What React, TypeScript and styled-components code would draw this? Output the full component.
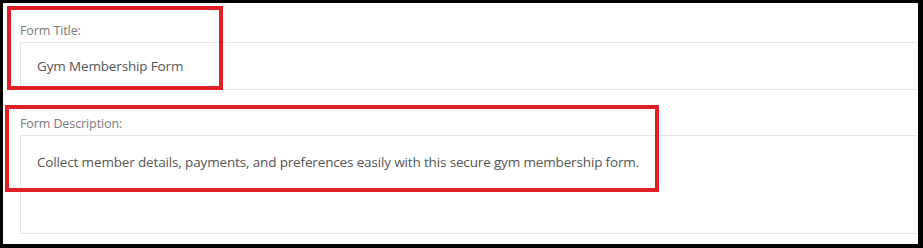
import React from "react";
import styled, { createGlobalStyle } from "styled-components";

const Global = createGlobalStyle`
  html, body { margin: 0; padding: 0; background: #ffffff; }
  * { box-sizing: border-box; }
`;

const Frame = styled.div`
  position: relative;
  width: 923px;
  height: 248px;
  background: #ffffff;
  border-style: solid;
  border-color: #000000;
  border-width: 3px 5px 4px 3px;
  padding: 19px 0 0 17px;
  display: flex;
  flex-direction: column;
  gap: 25px;
  font-family: "Open Sans", "Noto Sans", sans-serif;
`;

const Field = styled.div`
  display: flex;
  flex-direction: column;
  gap: 2px;
`;

const Label = styled.label`
  display: block;
  height: 18px;
  line-height: 18px;
  font-size: 12.5px;
  color: #7a7a7a;
  letter-spacing: -0.1px;
`;

const TextBox = styled.input`
  display: block;
  width: 100%;
  height: 48px;
  margin: 0;
  padding: 0 16px;
  border: 1px solid #e6e6e6;
  border-right-color: #f0f0f0;
  background: #ffffff;
  font-family: inherit;
  font-size: 13.5px;
  color: #555555;
  letter-spacing: -0.15px;
  outline: none;
`;

const TextArea = styled.textarea`
  display: block;
  width: 100%;
  height: 99px;
  margin: 0;
  padding: 16px 16px;
  border: 1px solid #e6e6e6;
  border-right-color: #f0f0f0;
  background: #ffffff;
  font-family: inherit;
  font-size: 13.5px;
  line-height: 20px;
  color: #555555;
  letter-spacing: -0.15px;
  resize: none;
  outline: none;
`;

const Highlight = styled.div<{ $top: number; $left: number; $w: number; $h: number }>`
  position: absolute;
  top: ${(p) => p.$top}px;
  left: ${(p) => p.$left}px;
  width: ${(p) => p.$w}px;
  height: ${(p) => p.$h}px;
  border: 4px solid #e01e25;
  pointer-events: none;
`;

export default function App() {
  return (
    <>
      <Global />
      <Frame>
        <Field>
          <Label>Form Title:</Label>
          <TextBox readOnly defaultValue="Gym Membership Form" />
        </Field>
        <Field>
          <Label>Form Description:</Label>
          <TextArea
            readOnly
            defaultValue="Collect member details, payments, and preferences easily with this secure gym membership form."
          />
        </Field>
        <Highlight $top={3} $left={4} $w={216} $h={84} />
        <Highlight $top={102} $left={2} $w={654} $h={87} />
      </Frame>
    </>
  );
}
